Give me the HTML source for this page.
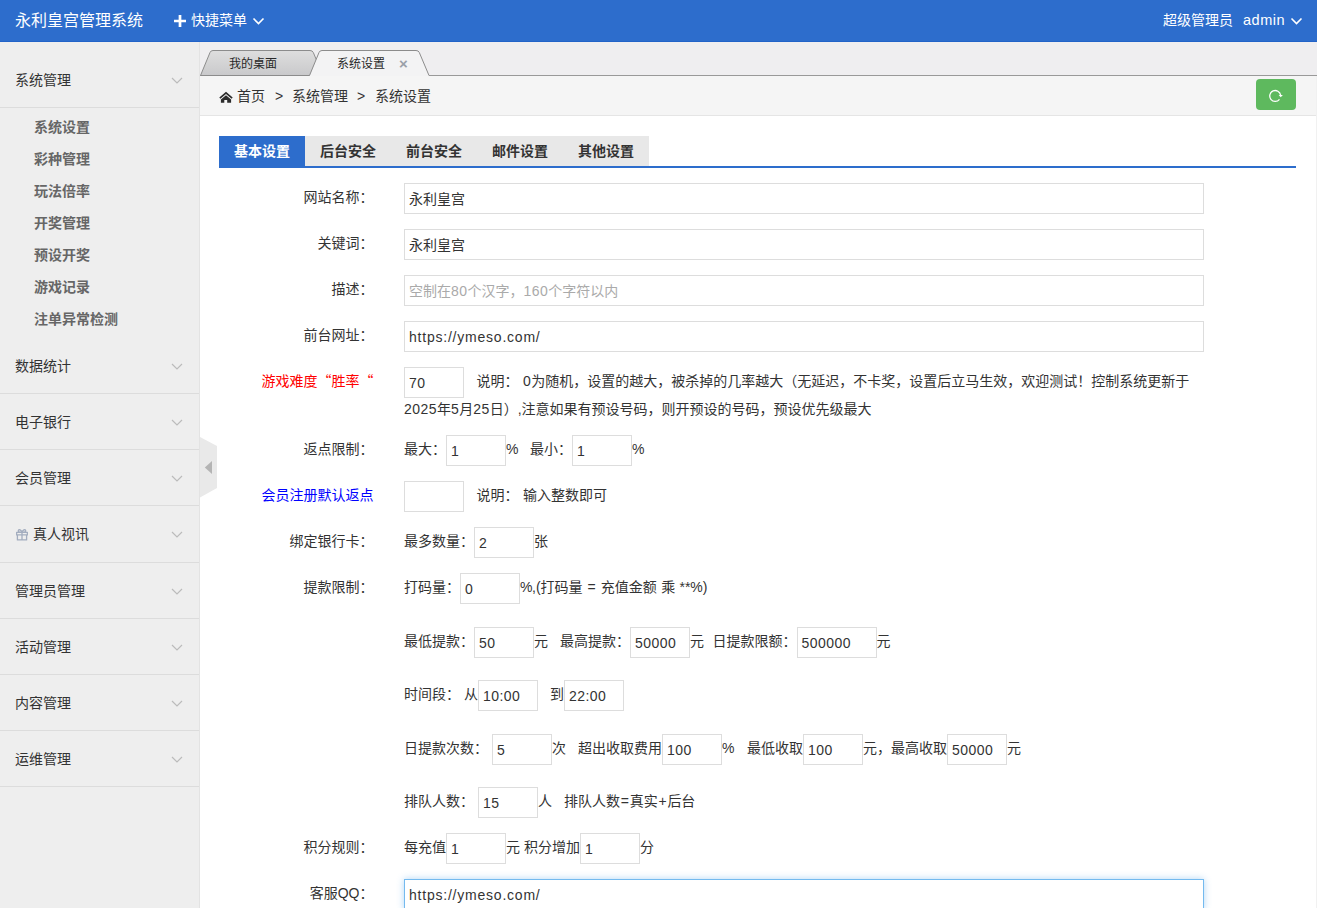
<!DOCTYPE html>
<html lang="zh-CN">
<head>
<meta charset="utf-8">
<title>永利皇宫管理系统</title>
<style>
*{box-sizing:border-box;margin:0;padding:0}
html,body{width:1317px;height:908px;overflow:hidden;background:#fff}
body{font-family:"Liberation Sans","Noto Sans CJK SC",sans-serif;font-size:14px;color:#333;position:relative}
ul{list-style:none}
.abs{position:absolute}
/* header */
#hd{position:absolute;left:0;top:0;width:1317px;height:42px;background:#2d6dcc;border-bottom:1px solid #2263c8;color:#fff}
#hd .logo{position:absolute;left:15px;top:0;line-height:41px;font-size:16px;white-space:nowrap}
#hd .quick{position:absolute;left:191px;top:0;line-height:41px;font-size:14px;white-space:nowrap}
#hd .role{position:absolute;left:1163px;top:0;line-height:41px;font-size:14px;white-space:nowrap}
#hd .user{position:absolute;left:1243px;top:0;line-height:41px;font-size:14.5px;letter-spacing:.5px;white-space:nowrap}
#hd svg{position:absolute}
/* aside */
#aside{position:absolute;left:0;top:42px;width:200px;height:866px;background:#eeeeee;border-right:1px solid #e3e3e3}
#aside .dt{position:absolute;left:0;width:199px;height:56px;border-bottom:1px solid #dcdcdc;line-height:57px;padding-left:15px;color:#333;font-size:14px;white-space:nowrap}
#aside .dt svg{position:absolute;left:171px;top:24.5px}
#aside .sub{position:absolute;left:34px;font-weight:bold;color:#666;line-height:32px;height:32px;white-space:nowrap;font-size:14px}
/* main */
#main{position:absolute;left:200px;top:42px;width:1117px;height:866px;background:#fff}
#tabnav{position:absolute;left:0;top:0;width:1117px;height:34px;background:#efeef0;border-bottom:1px solid #999}
#tabnav .t{position:absolute;top:9px;height:25px;line-height:26px;font-size:12px;color:#282828;white-space:nowrap}
#bc{position:absolute;left:0;top:34px;width:1117px;height:40px;background:#f5f5f5;border-bottom:1px solid #e5e5e5;line-height:41px;font-size:14px;color:#333;white-space:nowrap}
#bc span{position:absolute;top:0}
#refresh{position:absolute;left:1056px;top:37px;width:40px;height:31px;background:#5eb95e;border-radius:4px}
#toggle{position:absolute;left:0;top:395px}
/* tabs */
#tabs{position:absolute;left:19px;top:94px;width:1077px;height:32px;border-bottom:2px solid #2d6dcc}
#tabs span{position:absolute;top:0;height:30px;line-height:30px;width:86px;text-align:center;font-weight:bold;font-size:14px;background:#e8e8e8;color:#333}
#tabs span.on{background:#2d6dcc;color:#fff}
/* form */
.lab{position:absolute;left:3.5px;width:170px;text-align:right;line-height:22px;white-space:nowrap;color:#333;font-size:14px}
.ctl{position:absolute;left:204px;white-space:nowrap;line-height:22px;font-size:14px;color:#333}
.inp{display:inline-block;vertical-align:middle;height:31px;border:1px solid #ddd;background:#fff;padding:0 4px;line-height:31px;font-size:14px;color:#333;width:60px;white-space:nowrap;overflow:hidden}
.inp.full{position:absolute;left:204px;width:800px}
.ph{color:#aaa}
.g{display:inline-block;width:12px}
.pc{display:inline-block;width:12px}
.d{letter-spacing:.45px}
.url{letter-spacing:.78px}
.op{display:inline-block;width:9.7px;text-align:center}
.q{font-family:"Noto Sans CJK SC",sans-serif}
</style>
</head>
<body>
<div id="hd">
  <div class="logo">永利皇宫管理系统</div>
  <svg style="left:174px;top:15px" width="12" height="12" viewBox="0 0 12 12"><path d="M6 0v12M0 6h12" stroke="#fff" stroke-width="2.7" fill="none"/></svg>
  <div class="quick">快捷菜单</div>
  <svg style="left:252px;top:16.7px" width="13" height="9" viewBox="0 0 13 9"><path d="M1.5 1.5l5 5 5-5" stroke="#fff" stroke-width="1.6" fill="none"/></svg>
  <div class="role">超级管理员</div>
  <div class="user">admin</div>
  <svg style="left:1290px;top:16.7px" width="13" height="9" viewBox="0 0 13 9"><path d="M1.5 1.5l5 5 5-5" stroke="#fff" stroke-width="1.6" fill="none"/></svg>
</div>

<div id="aside">
  <div class="dt" style="top:10px">系统管理<svg width="12" height="8" viewBox="0 0 12 8"><path d="M1 1l5 5 5-5" stroke="#bbb" stroke-width="1.2" fill="none"/></svg></div>
  <div class="sub" style="top:69px">系统设置</div>
  <div class="sub" style="top:101px">彩种管理</div>
  <div class="sub" style="top:133px">玩法倍率</div>
  <div class="sub" style="top:165px">开奖管理</div>
  <div class="sub" style="top:197px">预设开奖</div>
  <div class="sub" style="top:229px">游戏记录</div>
  <div class="sub" style="top:261px">注单异常检测</div>
  <div class="dt" style="top:296px">数据统计<svg width="12" height="8" viewBox="0 0 12 8"><path d="M1 1l5 5 5-5" stroke="#bbb" stroke-width="1.2" fill="none"/></svg></div>
  <div class="dt" style="top:352px">电子银行<svg width="12" height="8" viewBox="0 0 12 8"><path d="M1 1l5 5 5-5" stroke="#bbb" stroke-width="1.2" fill="none"/></svg></div>
  <div class="dt" style="top:408px">会员管理<svg width="12" height="8" viewBox="0 0 12 8"><path d="M1 1l5 5 5-5" stroke="#bbb" stroke-width="1.2" fill="none"/></svg></div>
  <div class="dt" style="top:464px;height:57px;line-height:57px"><span style="display:inline-block;width:18px"></span>真人视讯<svg width="12" height="8" viewBox="0 0 12 8"><path d="M1 1l5 5 5-5" stroke="#bbb" stroke-width="1.2" fill="none"/></svg>
    <svg style="left:16px;top:22.9px" width="12" height="12" viewBox="0 0 12 12"><path d="M0.6 3.3h10.8v2.6h-10.8zM1.4 5.9h9.2v5h-9.2zM6 3.3v7.6M5.8 3.2C3 3.4 2 2.4 2.4 1.4 3 0.2 5.2 0.8 5.9 3.2zM6.2 3.2C9 3.4 10 2.4 9.6 1.4 9 0.2 6.8 0.8 6.1 3.2z" stroke="#a3adbf" stroke-width="1.3" fill="none" stroke-linejoin="round"/></svg></div>
  <div class="dt" style="top:521px">管理员管理<svg width="12" height="8" viewBox="0 0 12 8"><path d="M1 1l5 5 5-5" stroke="#bbb" stroke-width="1.2" fill="none"/></svg></div>
  <div class="dt" style="top:577px">活动管理<svg width="12" height="8" viewBox="0 0 12 8"><path d="M1 1l5 5 5-5" stroke="#bbb" stroke-width="1.2" fill="none"/></svg></div>
  <div class="dt" style="top:633px">内容管理<svg width="12" height="8" viewBox="0 0 12 8"><path d="M1 1l5 5 5-5" stroke="#bbb" stroke-width="1.2" fill="none"/></svg></div>
  <div class="dt" style="top:689px">运维管理<svg width="12" height="8" viewBox="0 0 12 8"><path d="M1 1l5 5 5-5" stroke="#bbb" stroke-width="1.2" fill="none"/></svg></div>
</div>

<div id="main">
  <div id="tabnav">
    <svg class="abs" style="left:0;top:0" width="240" height="34" viewBox="0 0 240 34">
      <defs><linearGradient id="g1" x1="0" y1="0" x2="0" y2="1"><stop offset="0" stop-color="#dedede"/><stop offset="1" stop-color="#c9c9cb"/></linearGradient></defs>
      <path d="M0.5 33.5 L10 10.5 Q10.8 8.5 13 8.5 L110 8.5 Q112.5 8.5 113.3 10.5 L123 33.5 Z" fill="url(#g1)" stroke="#8c8c8c" stroke-width="1"/>
      <path d="M109.5 34 L119 10.5 Q119.8 8.5 122 8.5 L216 8.5 Q218.5 8.5 219.3 10.5 L229 33.5 L229 34 Z" fill="#f3f3f4"/>
      <path d="M109.5 33.5 L119 10.5 Q119.8 8.5 122 8.5 L216 8.5 Q218.5 8.5 219.3 10.5 L229 33.5" fill="none" stroke="#8c8c8c" stroke-width="1"/>
    </svg>
    <div class="t" style="left:29px">我的桌面</div>
    <div class="t" style="left:137px">系统设置</div>
    <div class="t" style="left:199px;top:9px;color:#9aa0a8;font-size:15px;font-weight:bold">×</div>
  </div>
  <div id="bc">
    <svg class="abs" style="left:19px;top:15px" width="14" height="12" viewBox="0 0 14 12"><path d="M0.3 6.6L7 0.8l6.7 5.8-1.1 1.2L7 2.9 1.4 7.8z M1.9 8.6L7 4.3l5.1 4.3v3.2H8.2V9.1H5.3v2.7H1.9z" fill="#2b2b2b"/></svg>
    <span style="left:37px">首页</span><span style="left:75px">&gt;</span><span style="left:92px">系统管理</span><span style="left:157px">&gt;</span><span style="left:175px">系统设置</span>
  </div>
  <div id="refresh"><svg class="abs" style="left:11px;top:9px" width="16" height="16" viewBox="0 0 16 16"><path d="M13.6 7.2A5.45 5.45 0 1 0 12.5 11.35" stroke="#fff" stroke-width="1.3" fill="none"/><path d="M11.7 6.9h4.2l-2.2 2.4z" fill="#fff"/></svg></div>
  <svg id="toggle" width="17" height="62" viewBox="0 0 17 62"><path d="M0 0L17 9V51L0 60.6z" fill="#e9e9e9"/><path d="M12 24v13l-7.2-6.5z" fill="#b4b4b4"/></svg>

  <div class="abs" style="left:1116px;top:34px;width:1px;height:832px;background:#f1f1f1"></div>
  <div id="tabs">
    <span class="on" style="left:0">基本设置</span>
    <span style="left:86px">后台安全</span>
    <span style="left:172px">前台安全</span>
    <span style="left:258px">邮件设置</span>
    <span style="left:344px">其他设置</span>
  </div>

  <div class="lab" style="top:144px">网站名称：</div>
  <div class="inp full" style="top:141px">永利皇宫</div>
  <div class="lab" style="top:190px">关键词：</div>
  <div class="inp full" style="top:187px">永利皇宫</div>
  <div class="lab" style="top:236px">描述：</div>
  <div class="inp full ph" style="top:233px">空制在<span class="d">80</span>个汉字，<span class="d">160</span>个字符以内</div>
  <div class="lab" style="top:282px">前台网址：</div>
  <div class="inp full url" style="top:279px">https://ymeso.com/</div>

  <div class="lab q" style="top:327px;color:#f00">游戏难度“胜率“</div>
  <div class="ctl" style="top:325px;white-space:normal;width:800px;line-height:22.4px"><span class="inp d">70</span><i class="g" style="width:12.6px"></i>说明：<i class="g" style="width:4.5px"></i><span class="d">0</span>为随机，设置的越大，被杀掉的几率越大（无延迟，不卡奖，设置后立马生效，欢迎测试！控制系统更新于<span class="d">2025</span>年<span class="d">5</span>月<span class="d">25</span>日）,注意如果有预设号码，则开预设的号码，预设优先级最大</div>

  <div class="lab" style="top:396px">返点限制：</div>
  <div class="ctl" style="top:393px">最大：<span class="inp d">1</span><span class="pc">%</span><i class="g"></i>最小：<span class="inp d">1</span><span class="pc">%</span></div>

  <div class="lab" style="top:442px;color:#00f">会员注册默认返点</div>
  <div class="ctl" style="top:439px"><span class="inp"></span><i class="g" style="width:12.6px"></i>说明：<i class="g" style="width:4.5px"></i>输入整数即可</div>

  <div class="lab" style="top:488px">绑定银行卡：</div>
  <div class="ctl" style="top:485px">最多数量：<span class="inp d">2</span>张</div>

  <div class="lab" style="top:534px">提款限制：</div>
  <div class="ctl" style="top:531px">打码量：<span class="inp d">0</span><span class="pc">%</span>,(打码量<i class="g" style="width:4.3px"></i><span class="op">=</span><i class="g" style="width:4.3px"></i>充值金额<i class="g" style="width:4.3px"></i>乘<i class="g" style="width:4.3px"></i>**%)</div>
  <div class="ctl" style="top:585px">最低提款：<span class="inp d">50</span>元<i class="g"></i>最高提款：<span class="inp d">50000</span>元<i class="g" style="width:8.5px"></i>日提款限额：<span class="inp d" style="width:80px">500000</span>元</div>
  <div class="ctl" style="top:638px">时间段：<i class="g" style="width:4px"></i>从<span class="inp d">10:00</span><i class="g"></i>到<span class="inp d">22:00</span></div>
  <div class="ctl" style="top:692px">日提款次数：<i class="g" style="width:4px"></i><span class="inp d">5</span>次<i class="g"></i>超出收取费用<span class="inp d">100</span><span class="pc">%</span><i class="g" style="width:13px"></i>最低收取<span class="inp d">100</span>元，最高收取<span class="inp d">50000</span>元</div>
  <div class="ctl" style="top:745px">排队人数：<i class="g" style="width:4px"></i><span class="inp d">15</span>人<i class="g"></i>排队人数<span class="op">=</span>真实<span class="op">+</span>后台</div>

  <div class="lab" style="top:794px">积分规则：</div>
  <div class="ctl" style="top:791px">每充值<span class="inp d">1</span>元<i class="g" style="width:4px"></i>积分增加<span class="inp d">1</span>分</div>

  <div class="lab" style="top:840px">客服QQ：</div>
  <div class="inp full url" style="top:837px;border-color:#74baef;box-shadow:0 0 7px rgba(80,165,235,.45)">https://ymeso.com/</div>
</div>
</body>
</html>
